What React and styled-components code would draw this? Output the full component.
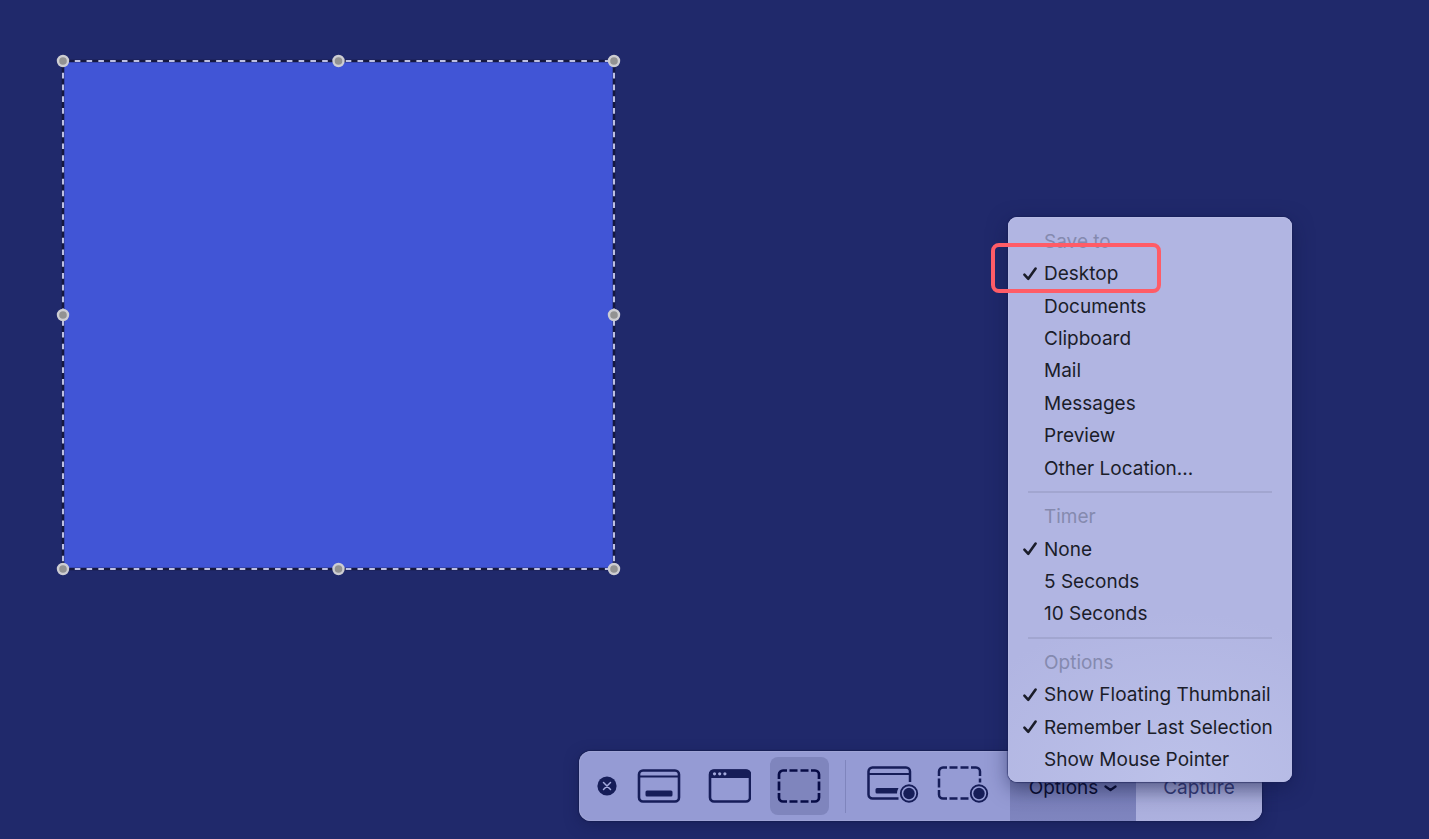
import React from "react";
import styled, { createGlobalStyle } from "styled-components";

const GlobalStyle = createGlobalStyle`
  *, *::before, *::after { box-sizing: border-box; }
  body {
    margin: 0;
    background: #20296b;
    font-family: Inter, "Liberation Sans", sans-serif;
    font-size: 19px;
  }
  button {
    margin: 0;
    padding: 0;
    border: 0;
    background: none;
    color: inherit;
    font: inherit;
    text-align: left;
  }
`;

const Desktop = styled.main`
  position: relative;
  min-height: 100vh;
  overflow: hidden;
  background: #20296b;
`;

const Selection = styled.section`
  position: absolute;
  top: 61px;
  left: 63px;
  width: 551px;
  height: 508px;
  background: #4155d6;
`;

const SelectionFrame = styled.svg`
  display: block;
  width: 100%;
  height: 100%;
  overflow: visible;
`;

const Toolbar = styled.div`
  position: absolute;
  top: 751px;
  left: 579px;
  display: flex;
  align-items: center;
  height: 70px;
  padding-left: 18px;
  border-radius: 12px;
  background: #959bd4;
  box-shadow: inset 0 0 0 1px #9fa4d6, 0 0 1px 1px #171e55, 0 4px 14px #141a4c80;
`;

const CloseButton = styled.button`
  display: grid;
  width: 20px;
  height: 20px;
  margin-right: 13px;
`;

const ModeGroup = styled.div`
  display: flex;
  gap: 11px;
`;

const ModeButton = styled.button`
  display: grid;
  place-items: center;
  width: 59px;
  height: 58px;
  border-radius: 8px;
  background: ${(p) => (p.$active ? "#7f85bd" : "transparent")};
  color: ${(p) => (p.$active ? "#070b45" : "#161d58")};
`;

const Divider = styled.div`
  width: 1px;
  height: 53px;
  margin: 0 17px 0 16px;
  background: #7f85bd;
`;

const OptionsWrap = styled.div`
  position: relative;
  align-self: stretch;
  display: flex;
  margin-left: 18px;
`;

const ActionButton = styled.button`
  display: flex;
  align-items: center;
  justify-content: center;
  gap: 6px;
  width: 126px;
  height: 70px;
  padding-top: 2px;
  border-radius: ${(p) => (p.$open ? "0" : "0 12px 12px 0")};
  background: ${(p) =>
    p.$open
      ? "linear-gradient(#7177ac 45%, #7b81bb 75%, #7f85bf)"
      : "linear-gradient(#9a9eca 45%, #a9addb 75%, #adb1df)"};
  color: ${(p) => (p.$open ? "#080b2c" : "#343a72")};
`;

const Menu = styled.div`
  position: absolute;
  z-index: 2;
  left: -2px;
  bottom: 39px;
  display: flex;
  flex-direction: column;
  width: 284px;
  min-height: 565px;
  padding: 8px 0 6px;
  border-radius: 9px;
  background: radial-gradient(ellipse 240px 170px at 60% 100%, #bcc1e9, #b1b5e2);
  box-shadow: inset 0 0 0 1px #b7bbe4, 0 0 1px 1px #171e5580, 0 6px 20px #10154680;
`;

const menuRow = `
  display: flex;
  align-items: center;
  flex: 2 0 32px;
  white-space: nowrap;
`;

const MenuHeading = styled.div`
  ${menuRow}
  padding-left: 36px;
  color: #858aaf;
`;

const MenuItem = styled.button`
  ${menuRow}
  color: #1b1d2a;
`;

const CheckSlot = styled.span`
  display: grid;
  justify-content: center;
  flex: none;
  width: 16px;
  margin: 0 6px 0 14px;
`;

const MenuRule = styled.div`
  display: flex;
  align-items: center;
  flex: 1 0 16px;
  padding: 0 20px;

  &::before {
    content: "";
    flex: 1;
    height: 2px;
    background: #a2a6d0;
  }
`;

const Highlight = styled.div`
  position: absolute;
  z-index: 3;
  top: 243px;
  left: 991px;
  width: 170px;
  height: 50px;
  border: 4px solid #ff5c67;
  border-radius: 8px;
  pointer-events: none;
`;

const sections = [
  {
    title: "Save to",
    items: ["Desktop", "Documents", "Clipboard", "Mail", "Messages", "Preview", "Other Location..."],
    checked: ["Desktop"],
    role: "menuitemradio",
  },
  {
    title: "Timer",
    items: ["None", "5 Seconds", "10 Seconds"],
    checked: ["None"],
    role: "menuitemradio",
  },
  {
    title: "Options",
    items: ["Show Floating Thumbnail", "Remember Last Selection", "Show Mouse Pointer"],
    checked: ["Show Floating Thumbnail", "Remember Last Selection"],
    role: "menuitemcheckbox",
  },
];

const edges = [
  ["0%", "0%", "100%", "0%"],
  ["0%", "100%", "100%", "100%"],
  ["0%", "0%", "0%", "100%"],
  ["100%", "0%", "100%", "100%"],
];

const handles = [
  ["0%", "0%"], ["50%", "0%"], ["100%", "0%"],
  ["0%", "50%"], ["100%", "50%"],
  ["0%", "100%"], ["50%", "100%"], ["100%", "100%"],
];

function SelectionArea() {
  return (
    <Selection aria-label="Selected area">
      <SelectionFrame aria-hidden="true">
        {edges.map(([x1, y1, x2, y2], i) => (
          <g key={i}>
            <line x1={x1} y1={y1} x2={x2} y2={y2} stroke="#15183f" strokeWidth="2.6" />
            <line x1={x1} y1={y1} x2={x2} y2={y2} stroke="#bdc0e2" strokeWidth="2.1" strokeDasharray="5.6 6.18" />
          </g>
        ))}
        {handles.map(([cx, cy], i) => (
          <circle key={i} cx={cx} cy={cy} r="5" fill="#929292" stroke="#cdcdd2" strokeWidth="2.4" />
        ))}
      </SelectionFrame>
    </Selection>
  );
}

function Check() {
  return (
    <svg width="16" height="16" viewBox="0 0 16 16" fill="none" aria-hidden="true">
      <path d="M2.4 8.600 6.300 12.800 13.600 2.600" stroke="#1b1d2a" strokeWidth="2.6" strokeLinecap="round" strokeLinejoin="round" />
    </svg>
  );
}

function ScreenIcon() {
  return (
    <svg width="45" height="34" viewBox="0 0 45 34" fill="none" stroke="currentColor" aria-hidden="true">
      <rect x="2" y="1.5" width="40" height="31" rx="4" strokeWidth="2.6" />
      <path d="M2 7.5h40" strokeWidth="2.2" />
      <rect x="8.5" y="21.5" width="27" height="6" rx="1.5" fill="currentColor" stroke="none" />
    </svg>
  );
}

function WindowIcon() {
  return (
    <svg width="43" height="34" viewBox="0 0 43 34" fill="none" aria-hidden="true">
      <rect x="2" y="1.5" width="40" height="31" rx="4" stroke="currentColor" strokeWidth="2.6" />
      <path d="M1 9V5a4.500 4.500 0 0 1 4.500-4.500h33A4.500 4.500 0 0 1 43 5v4Z" fill="currentColor" />
      <g fill="#a4aadd">
        <circle cx="6.500" cy="4.800" r="1.600" />
        <circle cx="11.700" cy="4.800" r="1.600" />
        <circle cx="16.900" cy="4.800" r="1.600" />
      </g>
    </svg>
  );
}

function AreaIcon() {
  return (
    <svg width="45" height="34" viewBox="0 0 45 34" fill="none" stroke="currentColor" strokeWidth="2.7" aria-hidden="true">
      <path d="M2 10V5.500a4 4 0 0 1 4-4h4M34 1.500h4a4 4 0 0 1 4 4V10M42 24v4.500a4 4 0 0 1-4 4h-4M10 32.500H6a4 4 0 0 1-4-4V24" />
      <path d="M12.500 1.500h8M23.500 1.500h8M12.500 32.500h8M23.500 32.500h8M2 12.500v9M42 12.500v9" />
    </svg>
  );
}

function RecordScreenIcon() {
  return (
    <svg width="52" height="40" viewBox="0 0 52 40" fill="none" stroke="currentColor" aria-hidden="true">
      <path d="M31.500 32.500H5.500a4 4 0 0 1-4-4v-23a4 4 0 0 1 4-4h33.500a4 4 0 0 1 4 4v10.500" strokeWidth="2.500" />
      <path d="M1.500 8h41.500" strokeWidth="2.100" />
      <path d="M10 22h21.500a12 12 0 0 0-1.500 5.500H10a1.500 1.500 0 0 1-1.500-1.500v-2.500a1.500 1.500 0 0 1 1.500-1.500Z" fill="currentColor" stroke="none" />
      <circle cx="42" cy="27.500" r="8.200" strokeWidth="1.900" />
      <circle cx="42" cy="27.500" r="5.700" fill="currentColor" stroke="none" />
    </svg>
  );
}

function RecordAreaIcon() {
  return (
    <svg width="52" height="40" viewBox="0 0 52 40" fill="none" stroke="currentColor" strokeWidth="2.500" aria-hidden="true">
      <path d="M2 10V5.500a4 4 0 0 1 4-4h4M34 1.500h5a4 4 0 0 1 4 4V10M10 32.500H6a4 4 0 0 1-4-4V24" />
      <path d="M12.500 1.500h8M23.500 1.500h8M12.500 32.500h8M23.500 32.500h8M2 12.500v9M43 12.500v4" />
      <circle cx="42" cy="27.500" r="8.200" strokeWidth="1.900" />
      <circle cx="42" cy="27.500" r="5.700" fill="currentColor" stroke="none" />
    </svg>
  );
}

function CloseIcon() {
  return (
    <svg width="20" height="20" viewBox="0 0 20 20" aria-hidden="true">
      <circle cx="10" cy="10" r="9.600" fill="#161d58" />
      <path d="m6.500 6.500 7 7m0-7-7 7" stroke="#a4aadd" strokeWidth="1.500" strokeLinecap="round" />
    </svg>
  );
}

function Chevron() {
  return (
    <svg width="13" height="10" viewBox="0 0 13 10" fill="none" aria-hidden="true">
      <path d="M1.500 4.500 6.500 8l5-3.500" stroke="currentColor" strokeWidth="2.300" strokeLinecap="round" strokeLinejoin="round" />
    </svg>
  );
}

function OptionsMenu() {
  return (
    <Menu role="menu" aria-label="Capture options">
      {sections.map((section, i) => (
        <React.Fragment key={section.title}>
          {i > 0 && <MenuRule role="separator" />}
          <MenuHeading>{section.title}</MenuHeading>
          {section.items.map((item) => {
            const checked = section.checked.includes(item);
            return (
              <MenuItem key={item} type="button" role={section.role} aria-checked={checked}>
                <CheckSlot>{checked && <Check />}</CheckSlot>
                {item}
              </MenuItem>
            );
          })}
        </React.Fragment>
      ))}
    </Menu>
  );
}

export default function App() {
  return (
    <Desktop>
      <GlobalStyle />
      <SelectionArea />
      <Toolbar role="toolbar" aria-label="Screenshot">
        <CloseButton type="button" aria-label="Close"><CloseIcon /></CloseButton>
        <ModeGroup>
          <ModeButton type="button" aria-label="Capture entire screen"><ScreenIcon /></ModeButton>
          <ModeButton type="button" aria-label="Capture window"><WindowIcon /></ModeButton>
          <ModeButton type="button" aria-label="Capture selection" aria-pressed="true" $active><AreaIcon /></ModeButton>
        </ModeGroup>
        <Divider />
        <ModeGroup>
          <ModeButton type="button" aria-label="Record entire screen"><RecordScreenIcon /></ModeButton>
          <ModeButton type="button" aria-label="Record selection"><RecordAreaIcon /></ModeButton>
        </ModeGroup>
        <OptionsWrap>
          <ActionButton type="button" aria-haspopup="menu" aria-expanded="true" $open>
            Options
            <Chevron />
          </ActionButton>
          <OptionsMenu />
        </OptionsWrap>
        <ActionButton type="button">Capture</ActionButton>
      </Toolbar>
      <Highlight />
    </Desktop>
  );
}
